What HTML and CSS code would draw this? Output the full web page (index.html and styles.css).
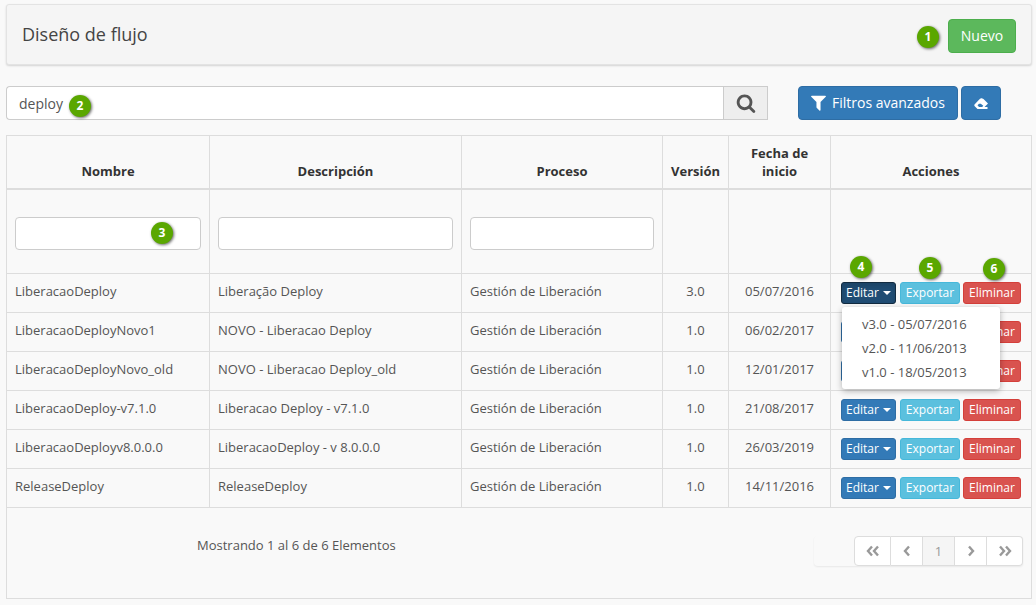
FILE: index.html
```html
<!DOCTYPE html>
<html lang="es">
<head>
  <meta charset="UTF-8">
  <title>Diseño de flujo</title>
  <link rel="stylesheet" href="styles.css">
</head>
<body>
<svg class="sprite" xmlns="http://www.w3.org/2000/svg">
  <symbol id="i-search" viewBox="0 0 1792 1792"><path d="M1216 832q0-185-131.500-316.500t-316.500-131.500-316.500 131.500-131.500 316.500 131.500 316.500 316.500 131.500 316.500-131.500 131.500-316.500zm512 832q0 52-38 90t-90 38q-54 0-90-38l-343-342q-179 124-399 124-143 0-273.500-55.500t-225-150-150-225-55.500-273.500 55.500-273.500 150-225 225-150 273.500-55.500 273.500 55.500 225 150 150 225 55.500 273.500q0 220-124 399l343 343q37 37 37 90z"/></symbol>
  <symbol id="i-filter" viewBox="0 0 1792 1792"><path d="M1595 295q17 41-14 70l-493 493v742q0 42-39 59-13 5-25 5-27 0-45-19l-256-256q-19-19-19-45v-486l-493-493q-31-29-14-70 17-39 59-39h1280q42 0 59 39z"/></symbol>
  <symbol id="i-eraser" viewBox="0 0 14 11"><path fill-rule="evenodd" d="M.5 6.500 6 .8Q6.800 0 7.800.3L9.500 1 14 5.500 10.500 9H13.500V11H3.500L.5 8Q0 7.200.5 6.500ZM3.500 7.300 5 9H8.200L9.300 7.800 6.800 5.700H5Z"/></symbol>
</svg>

<div class="page">
  <header class="panel">
    <h1>Diseño de flujo</h1>
    <span class="badge badge-1">1</span>
    <button class="btn btn-green">Nuevo</button>
  </header>

  <div class="search-row">
    <div class="search-box">
      <div class="search-field">deploy<span class="badge badge-2">2</span></div>
      <button class="search-btn"><svg class="icon-search"><use href="#i-search"/></svg></button>
    </div>
    <button class="btn btn-blue btn-filter"><svg class="icon-filter"><use href="#i-filter"/></svg>Filtros avanzados</button>
    <button class="btn btn-blue btn-eraser"><svg class="icon-eraser"><use href="#i-eraser"/></svg></button>
  </div>

  <div class="list">
    <table>
      <colgroup>
        <col class="c-name"><col class="c-desc"><col class="c-proc"><col class="c-ver"><col class="c-date"><col>
      </colgroup>
      <thead>
        <tr>
          <th>Nombre</th>
          <th>Descripción</th>
          <th>Proceso</th>
          <th>Versión</th>
          <th>Fecha de inicio</th>
          <th>Acciones</th>
        </tr>
      </thead>
      <tbody>
        <tr class="filters">
          <td><div class="filter-wrap"><input type="text"><span class="badge badge-3">3</span></div></td>
          <td><input type="text"></td>
          <td><input type="text"></td>
          <td></td>
          <td></td>
          <td class="badges-cell">
            <span class="badge badge-4">4</span>
            <span class="badge badge-5">5</span>
            <span class="badge badge-6">6</span>
          </td>
        </tr>
        <tr>
          <td>LiberacaoDeploy</td><td>Liberação Deploy</td><td>Gestión de Liberación</td><td class="mid">3.0</td><td class="mid">05/07/2016</td>
          <td class="actions">
            <div class="action-row">
              <div class="drop">
                <button class="act act-edit open">Editar<i class="caret"></i></button>
                <ul class="menu">
                  <li>v3.0 - 05/07/2016</li>
                  <li>v2.0 - 11/06/2013</li>
                  <li>v1.0 - 18/05/2013</li>
                </ul>
              </div>
              <button class="act act-export">Exportar</button>
              <button class="act act-delete">Eliminar</button>
            </div>
          </td>
        </tr>
        <tr>
          <td>LiberacaoDeployNovo1</td><td>NOVO - Liberacao Deploy</td><td>Gestión de Liberación</td><td class="mid">1.0</td><td class="mid">06/02/2017</td>
          <td class="actions"><div class="action-row"><button class="act act-edit">Editar<i class="caret"></i></button><button class="act act-export">Exportar</button><button class="act act-delete">Eliminar</button></div></td>
        </tr>
        <tr>
          <td>LiberacaoDeployNovo_old</td><td>NOVO - Liberacao Deploy_old</td><td>Gestión de Liberación</td><td class="mid">1.0</td><td class="mid">12/01/2017</td>
          <td class="actions"><div class="action-row"><button class="act act-edit">Editar<i class="caret"></i></button><button class="act act-export">Exportar</button><button class="act act-delete">Eliminar</button></div></td>
        </tr>
        <tr>
          <td>LiberacaoDeploy-v7.1.0</td><td>Liberacao Deploy - v7.1.0</td><td>Gestión de Liberación</td><td class="mid">1.0</td><td class="mid">21/08/2017</td>
          <td class="actions"><div class="action-row"><button class="act act-edit">Editar<i class="caret"></i></button><button class="act act-export">Exportar</button><button class="act act-delete">Eliminar</button></div></td>
        </tr>
        <tr>
          <td>LiberacaoDeployv8.0.0.0</td><td>LiberacaoDeploy - v 8.0.0.0</td><td>Gestión de Liberación</td><td class="mid">1.0</td><td class="mid">26/03/2019</td>
          <td class="actions"><div class="action-row"><button class="act act-edit">Editar<i class="caret"></i></button><button class="act act-export">Exportar</button><button class="act act-delete">Eliminar</button></div></td>
        </tr>
        <tr>
          <td>ReleaseDeploy</td><td>ReleaseDeploy</td><td>Gestión de Liberación</td><td class="mid">1.0</td><td class="mid">14/11/2016</td>
          <td class="actions"><div class="action-row"><button class="act act-edit">Editar<i class="caret"></i></button><button class="act act-export">Exportar</button><button class="act act-delete">Eliminar</button></div></td>
        </tr>
      </tbody>
    </table>

    <div class="list-foot">
      <p class="count">Mostrando 1 al 6 de 6 Elementos</p>
      <div class="pager-shade">
        <ul class="pager">
          <li><svg viewBox="0 0 14 12"><path d="M6 1.500 2 6l4 4.500M12 1.500 8 6l4 4.500"/></svg></li>
          <li><svg viewBox="0 0 14 12"><path d="M9 1.500 5 6l4 4.500"/></svg></li>
          <li class="current">1</li>
          <li><svg viewBox="0 0 14 12"><path d="M5 1.500 9 6l-4 4.500"/></svg></li>
          <li><svg viewBox="0 0 14 12"><path d="M2 1.500 6 6l-4 4.500M8 1.500 12 6l-4 4.500"/></svg></li>
        </ul>
      </div>
    </div>
  </div>
</div>
</body>
</html>
```

FILE: styles.css
```css
html {
    --line: #dddddd;
    --text: #555555;
    --blue: #337ab7;
    --blue-edge: #2e6da4;
}

* {
    box-sizing: border-box;
}

body {
    margin: 0;
    background: #f9f9f9;
    color: var(--text);
    font-family: "Open Sans", sans-serif;
    font-size: 13px;
}

button {
    font-family: inherit;
    cursor: pointer;
}

.sprite {
    display: none;
}

.page {
    position: relative;
    height: 605px;
    padding: 4px 4px 0 6px;
    overflow: hidden;
}

/* header */
.panel {
    display: flex;
    align-items: center;
    justify-content: space-between;
    position: relative;
    height: 61px;
    padding: 0 15px;
    background: #f5f5f5;
    border: 1px solid #e3e3e3;
    border-radius: 3px;
    box-shadow: 0 1px 2px rgba(0, 0, 0, .15);
}

.panel h1 {
    margin: 0 0 2px;
    color: #444444;
    font-size: 18px;
    font-weight: 400;
}

.btn {
    border-radius: 4px;
    color: #ffffff;
    font-size: 14px;
}

.btn-green {
    width: 68px;
    height: 34px;
    margin-top: 2px;
    padding: 0;
    background: #5cb85c;
    border: 1px solid #4cae4c;
}

.btn-blue {
    height: 34px;
    background: var(--blue);
    border: 1px solid var(--blue-edge);
}

/* search */
.search-row {
    display: flex;
    margin: 21px 0 15px;
}

.search-box {
    display: flex;
    width: 762px;
    margin-right: 30px;
}

.search-field {
    position: relative;
    flex: 1;
    height: 34px;
    padding: 0 12px;
    background: #ffffff;
    border: 1px solid #cccccc;
    border-right: 0;
    border-radius: 4px 0 0 4px;
    font-size: 14px;
    line-height: 34px;
}

.search-btn {
    width: 45px;
    height: 34px;
    padding: 0;
    background: #eeeeee;
    border: 1px solid #cccccc;
}

.icon-search {
    display: block;
    width: 20px;
    height: 20px;
    margin: 0 auto;
    fill: #555555;
}

.btn-filter {
    display: flex;
    align-items: center;
    width: 160px;
    margin-right: 3px;
    padding: 0 0 1px 10px;
    font-size: 14px;
}

.icon-filter {
    width: 19px;
    height: 19px;
    margin-right: 4px;
    fill: #ffffff;
}

.btn-eraser {
    width: 40px;
    padding: 0;
}

.icon-eraser {
    display: block;
    width: 14px;
    height: 11px;
    margin: 0 auto;
    fill: #ffffff;
}

/* table */
.list {
    width: 1026px;
    height: 464px;
    border: 1px solid var(--line);
    border-top: 0;
}

table {
    width: 1026px;
    margin-left: -1px;
    border-collapse: collapse;
    table-layout: fixed;
}

.c-name { width: 203px; }
.c-desc { width: 252px; }
.c-proc { width: 201px; }
.c-ver  { width: 66px; }
.c-date { width: 102px; }

th, td {
    border: 1px solid var(--line);
    padding: 0 8px;
}

th {
    height: 53px;
    padding-bottom: 8px;
    border-bottom-width: 2px;
    color: #333333;
    font-size: 13px;
    font-weight: 700;
    line-height: 18px;
    text-align: center;
    vertical-align: bottom;
}

td {
    height: 39px;
    padding-bottom: 5px;
}

.mid {
    text-align: center;
}

.filters td {
    position: relative;
    height: 85px;
    padding: 27px 8px 0;
    vertical-align: top;
}

input {
    display: block;
    width: 100%;
    height: 33px;
    background: #ffffff;
    border: 1px solid #cccccc;
    border-radius: 4px;
}

.filter-wrap {
    position: relative;
}

/* row actions */
.actions {
    padding: 0 0 0 10px;
}

.action-row {
    display: flex;
}

.drop {
    position: relative;
}

.act {
    display: block;
    height: 22px;
    margin-right: 3px;
    padding: 0 0 2px;
    border-radius: 3px;
    color: #ffffff;
    font-size: 12px;
}

.act-edit {
    width: 55px;
    margin-right: 4px;
    background: var(--blue);
    border: 1px solid var(--blue-edge);
}

.act-edit.open {
    background: #204d74;
    border-color: #122b40;
    box-shadow: inset 0 3px 5px rgba(0, 0, 0, .125);
}

.act-export {
    width: 60px;
    background: #5bc0de;
    border: 1px solid #46b8da;
}

.act-delete {
    width: 58px;
    margin-right: 0;
    background: #d9534f;
    border: 1px solid #d43f3a;
}

.caret {
    display: inline-block;
    margin-left: 4px;
    border-top: 4px solid #ffffff;
    border-left: 4px solid transparent;
    border-right: 4px solid transparent;
    vertical-align: 2px;
}

.menu {
    position: absolute;
    top: 25px;
    left: 1px;
    z-index: 5;
    width: 158px;
    height: 82px;
    margin: 0;
    padding: 5px 0;
    background: #ffffff;
    border-radius: 3px;
    box-shadow: 0 2px 6px rgba(0, 0, 0, .3);
    list-style: none;
}

.menu li {
    height: 24px;
    padding-left: 20px;
    font-size: 13px;
    line-height: 24px;
}

/* footer */
.list-foot {
    position: relative;
    height: 91px;
}

.count {
    margin: 0;
    padding: 28px 0 0 190px;
}

.pager-shade {
    position: absolute;
    top: 28px;
    right: 8px;
    width: 209px;
    height: 30px;
    padding-left: 40px;
    border-radius: 4px;
    box-shadow: 0 1px 2px rgba(0, 0, 0, .07);
}

.pager {
    display: flex;
    height: 30px;
    margin: 0;
    padding: 0;
    list-style: none;
}

.pager li {
    display: flex;
    align-items: center;
    justify-content: center;
    width: 32px;
    background: #ffffff;
    border: 1px solid var(--line);
    border-left: 0;
    color: #999999;
}

.pager li:first-child {
    width: 37px;
    border-left: 1px solid var(--line);
    border-radius: 4px 0 0 4px;
}

.pager li:last-child {
    width: 36px;
    border-radius: 0 4px 4px 0;
}

.pager .current {
    background: #f5f5f5;
}

.pager svg {
    width: 14px;
    height: 12px;
    fill: none;
    stroke: #999999;
    stroke-width: 2.4;
}

/* numbered markers laid over the page */
.badge {
    position: absolute;
    display: block;
    width: 22px;
    height: 22px;
    background: #5aa700;
    border-radius: 50%;
    box-shadow: 1px 1px 3px rgba(0, 0, 0, .6);
    color: #ffffff;
    font-size: 12px;
    font-weight: 700;
    line-height: 22px;
    text-align: center;
}

.badge-1 { top: 21px; left: 910px; }
.badge-2 { top: 8px; left: 62px; }
.badge-3 { top: 5px; left: 136px; }
.badge-4 { top: 66px; left: 19px; }
.badge-5 { top: 67px; left: 88px; }
.badge-6 { top: 68px; left: 152px; }
```
